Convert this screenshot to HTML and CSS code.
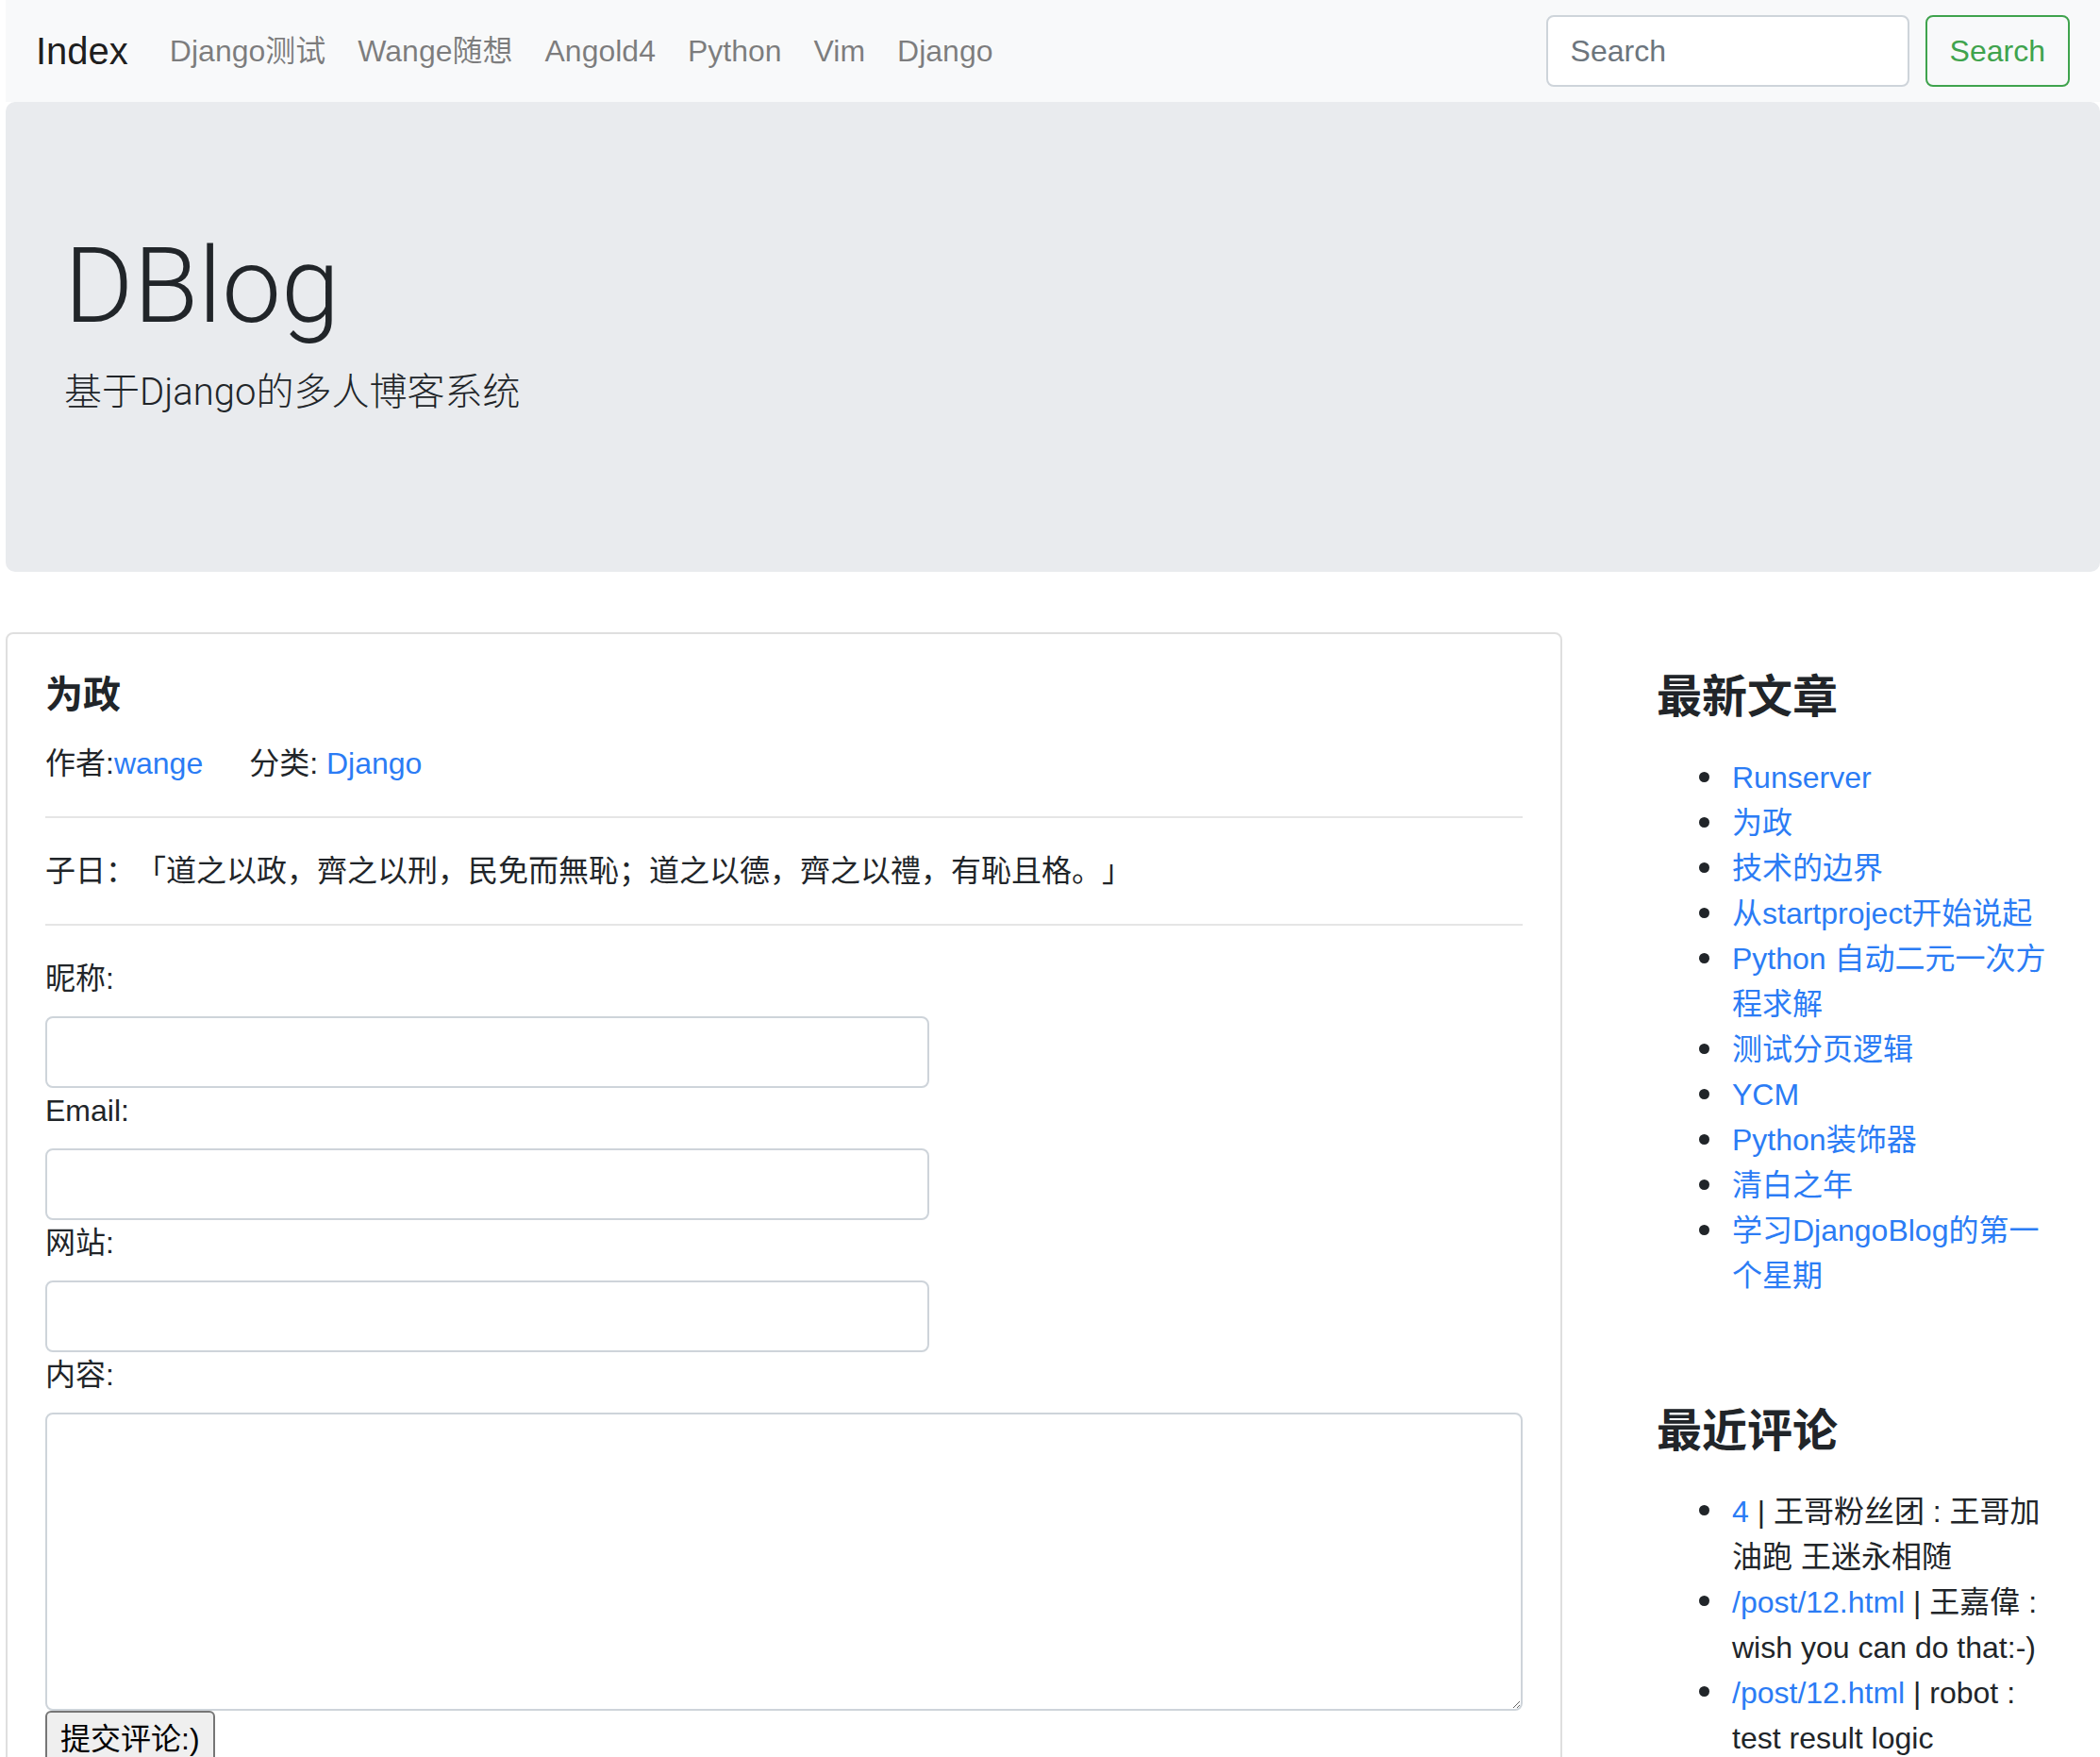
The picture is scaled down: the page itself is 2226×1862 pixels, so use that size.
FILE: index.html
```html
<!DOCTYPE html>
<html lang="zh-CN">
<head>
<meta charset="utf-8">
<title>DBlog</title>
<link rel="stylesheet" href="styles.css">
</head>
<body>
<div class="page">
  <nav class="navbar">
    <a class="brand" href="#">Index</a>
    <ul class="nav">
      <li><a href="#">Django测试</a></li>
      <li><a href="#">Wange随想</a></li>
      <li><a href="#">Angold4</a></li>
      <li><a href="#">Python</a></li>
      <li><a href="#">Vim</a></li>
      <li><a href="#">Django</a></li>
    </ul>
    <form class="search">
      <input class="search-input" type="search" placeholder="Search">
      <button class="search-btn" type="button">Search</button>
    </form>
  </nav>

  <header class="jumbotron">
    <h1 class="display">DBlog</h1>
    <p class="lead">基于Django的多人博客系统</p>
  </header>

  <div class="layout">
    <main class="main">
      <article class="card">
        <h5 class="card-title">为政</h5>
        <p class="meta">作者:<a href="#">wange</a><span class="meta-cat">分类: <a href="#">Django</a></span></p>
        <hr>
        <p class="quote">子日：「道之以政，齊之以刑，民免而無恥；道之以德，齊之以禮，有恥且格。」</p>
        <hr>
        <form class="comment-form">
          <label class="field-label">昵称:</label>
          <input class="field-input" type="text">
          <label class="field-label">Email:</label>
          <input class="field-input" type="text">
          <label class="field-label">网站:</label>
          <input class="field-input" type="text">
          <label class="field-label">内容:</label>
          <textarea class="field-text"></textarea>
          <button class="submit" type="button">提交评论:)</button>
        </form>
      </article>
    </main>

    <aside class="sidebar">
      <section class="widget">
        <h4 class="widget-title">最新文章</h4>
        <ul class="widget-list">
          <li><a href="#">Runserver</a></li>
          <li><a href="#">为政</a></li>
          <li><a href="#">技术的边界</a></li>
          <li><a href="#">从startproject开始说起</a></li>
          <li><a href="#">Python 自动二元一次方程求解</a></li>
          <li><a href="#">测试分页逻辑</a></li>
          <li><a href="#">YCM</a></li>
          <li><a href="#">Python装饰器</a></li>
          <li><a href="#">清白之年</a></li>
          <li><a href="#">学习DjangoBlog的第一个星期</a></li>
        </ul>
      </section>
      <section class="widget">
        <h4 class="widget-title">最近评论</h4>
        <ul class="widget-list">
          <li><a href="#">4</a> | 王哥粉丝团 : 王哥加油跑 王迷永相随</li>
          <li><a href="#">/post/12.html</a> | 王嘉偉 : wish you can do that:-)</li>
          <li><a href="#">/post/12.html</a> | robot : test result logic</li>
        </ul>
      </section>
    </aside>
  </div>
</div>
</body>
</html>
```

FILE: styles.css
```css
* { box-sizing: border-box; }

html, body {
  margin: 0;
  padding: 0;
  overflow: hidden;
}

body {
  font-family: "Liberation Sans", "Noto Sans CJK SC", sans-serif;
  font-size: 32px;
  line-height: 1.5;
  color: #212529;
  background: #fff;
  text-spacing-trim: space-all;
}

a {
  color: #2b7cf5;
  text-decoration: none;
}

.page {
  margin-left: 6px;
  width: 2220px;
}

/* Navbar */
.navbar {
  display: flex;
  align-items: center;
  height: 108px;
  padding: 0 32px;
  background: #f8f9fa;
}

.brand {
  font-size: 40px;
  line-height: 1.5;
  color: rgba(0, 0, 0, 0.9);
  margin-right: 27px;
}

.nav {
  display: flex;
  list-style: none;
  margin: 0;
  padding: 0;
}

.nav a {
  display: block;
  padding: 16px 17px;
  color: rgba(0, 0, 0, 0.5);
}

.search {
  margin: 0 0 0 auto;
  display: flex;
  align-items: center;
}

.search-input {
  width: 385px;
  height: 76px;
  margin-right: 17px;
  padding: 12px 24px;
  font: inherit;
  color: #495057;
  background: #fff;
  border: 2px solid #ced4da;
  border-radius: 8px;
}

.search-input::placeholder { color: #6c757d; }

.search-btn {
  height: 76px;
  padding: 12px 24px;
  font: inherit;
  color: #3fa34d;
  background: transparent;
  border: 2px solid #3fa34d;
  border-radius: 8px;
}

/* Jumbotron */
.jumbotron {
  background: #e9ebee;
  border-radius: 10px;
  padding: 128px 62px;
  margin-bottom: 64px;
}

.display {
  font-family: Roboto, "Liberation Sans", sans-serif;
  font-size: 112px;
  font-weight: 300;
  line-height: 1.2;
  margin: 0 0 16px;
}

.lead {
  font-family: Roboto, "Noto Sans CJK SC", sans-serif;
  font-size: 40px;
  font-weight: 300;
  margin: 0 0 32px;
}

/* Layout */
.layout {
  display: flex;
  align-items: flex-start;
}

.main {
  flex: none;
  width: 1650px;
}

.card {
  border: 2px solid rgba(0, 0, 0, 0.125);
  border-radius: 8px;
  padding: 40px;
}

.card-title {
  font-size: 40px;
  font-weight: 600;
  line-height: 1.2;
  margin: 0 0 24px;
}

.card p { margin: 0 0 32px; }

.meta { padding-top: 1px; }

.meta-cat { margin-left: 49px; }

hr {
  border: 0;
  border-top: 2px solid rgba(0, 0, 0, 0.1);
  margin: 32px 0;
}

.comment-form { margin: 0; }

.field-label {
  display: block;
  margin-bottom: 16px;
}

.field-input {
  display: block;
  width: 937px;
  height: 76px;
  padding: 12px 24px;
  font: inherit;
  border: 2px solid #ced4da;
  border-radius: 8px;
  background: #fff;
}

.field-text {
  display: block;
  width: 100%;
  height: 316px;
  padding: 12px 24px;
  font: inherit;
  border: 2px solid #ced4da;
  border-radius: 8px;
  background: #fff;
}

.submit {
  font: inherit;
  line-height: 1.5;
  padding: 4px 14px;
  color: #000;
  background: #efefef;
  border: 2px solid #767676;
  border-radius: 6px;
}

/* Sidebar */
.sidebar {
  flex: 1;
}

.widget {
  padding: 40px 38px 40px 100px;
}

.widget-title {
  font-size: 48px;
  font-weight: 600;
  line-height: 1.2;
  margin: 0 0 32px;
}

.widget-list {
  margin: 0 0 32px;
  padding-left: 80px;
  list-style: none;
}

.widget-list li::before {
  content: "";
  display: inline-block;
  width: 11px;
  height: 11px;
  margin-left: -35px;
  margin-right: 24px;
  border-radius: 50%;
  background: #212529;
  vertical-align: 0.2em;
}
```
